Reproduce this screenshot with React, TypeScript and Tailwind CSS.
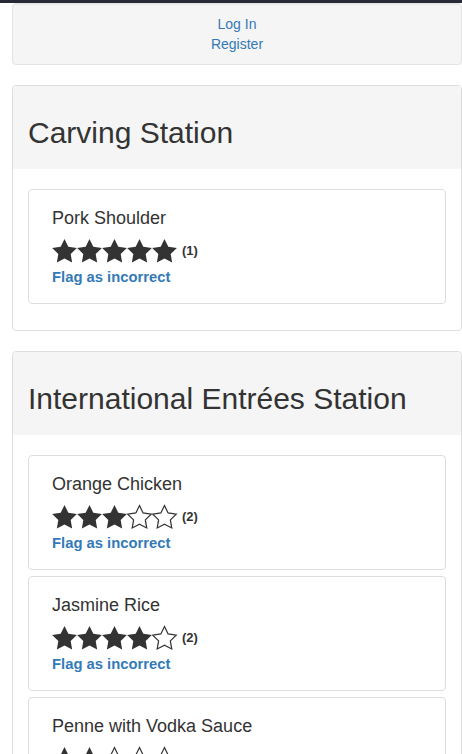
import React from 'react'

type Item = {
  name: string,
  rating: number,
  votes: number
}

type Station = {
  title: string,
  items: Item[]
}

const stations: Station[] = [
  {
    title: 'Carving Station',
    items: [{ name: 'Pork Shoulder', rating: 5, votes: 1 }]
  },
  {
    title: 'International Entrées Station',
    items: [
      { name: 'Orange Chicken', rating: 3, votes: 2 },
      { name: 'Jasmine Rice', rating: 4, votes: 2 },
      { name: 'Penne with Vodka Sauce', rating: 2, votes: 1 }
    ]
  }
]

const STAR = '12.5,0 16.32,7.74 24.86,9 18.68,15.01 20.14,23.5 12.5,19.5 4.86,23.5 6.32,15.01 0.14,9 8.68,7.74'

const Star = ({ filled }: { filled: boolean }) => (
  <svg width="25" height="24" viewBox="0 0 25 24" className="shrink-0 overflow-visible">
    {filled ? (
      <polygon points={STAR} fill="#333333" />
    ) : (
      <polygon points={STAR} fill="#ffffff" stroke="#333333" strokeWidth="1.3" strokeLinejoin="miter" transform="translate(0.6 0.6) scale(0.95)" />
    )}
  </svg>
)

const ItemCard = ({ item }: { item: Item }) => (
  <div className="border border-[#dddddd] rounded-[4px] bg-white px-[23px] pt-[18px] pb-[16px]">
    <h4 className="text-[18px] leading-[20px] text-[#333333]">{item.name}</h4>
    <div className="flex flex-row items-center mt-[11px] h-[24px]">
      {[1, 2, 3, 4, 5].map(n => (
        <Star key={n} filled={n <= item.rating} />
      ))}
      <span className="ml-[5px] text-[13px] font-bold text-[#333333]">({item.votes})</span>
    </div>
    <a href="#" className="block mt-[4px] text-[14.8px] leading-[20px] font-bold text-[#337ab7]">
      Flag as incorrect
    </a>
  </div>
)

export default function App() {
  return (
    <div className="min-h-[754px] bg-white text-[#333333] font-['Liberation_Sans',Arial,sans-serif] text-[14px] overflow-hidden">
      <div className="h-[3px] bg-[#272b35]" />

      <div className="pl-[12px]">
        {/* Account links */}
        <div className="border border-[#e3e3e3] rounded-[4px] bg-[#f5f5f5] shadow-[inset_0_1px_1px_rgba(0,0,0,0.05)] pt-[10px] pb-[10px] flex flex-col items-center mb-[20px]">
          <a href="#" className="leading-[20px] text-[#337ab7]">Log In</a>
          <a href="#" className="leading-[20px] text-[#337ab7]">Register</a>
        </div>

        {/* Stations */}
        {stations.map(station => (
          <div key={station.title} className="border border-[#dddddd] rounded-[4px] bg-white mb-[20px] overflow-hidden">
            <div className="bg-[#f5f5f5] px-[15px] pt-[30px] pb-[20px]">
              <h2 className="text-[30px] leading-[33px] text-[#333333]">{station.title}</h2>
            </div>
            <div className="px-[15px] pt-[20px] pb-[26px] flex flex-col gap-[6px]">
              {station.items.map(item => (
                <ItemCard key={item.name} item={item} />
              ))}
            </div>
          </div>
        ))}
      </div>
    </div>
  )
}
